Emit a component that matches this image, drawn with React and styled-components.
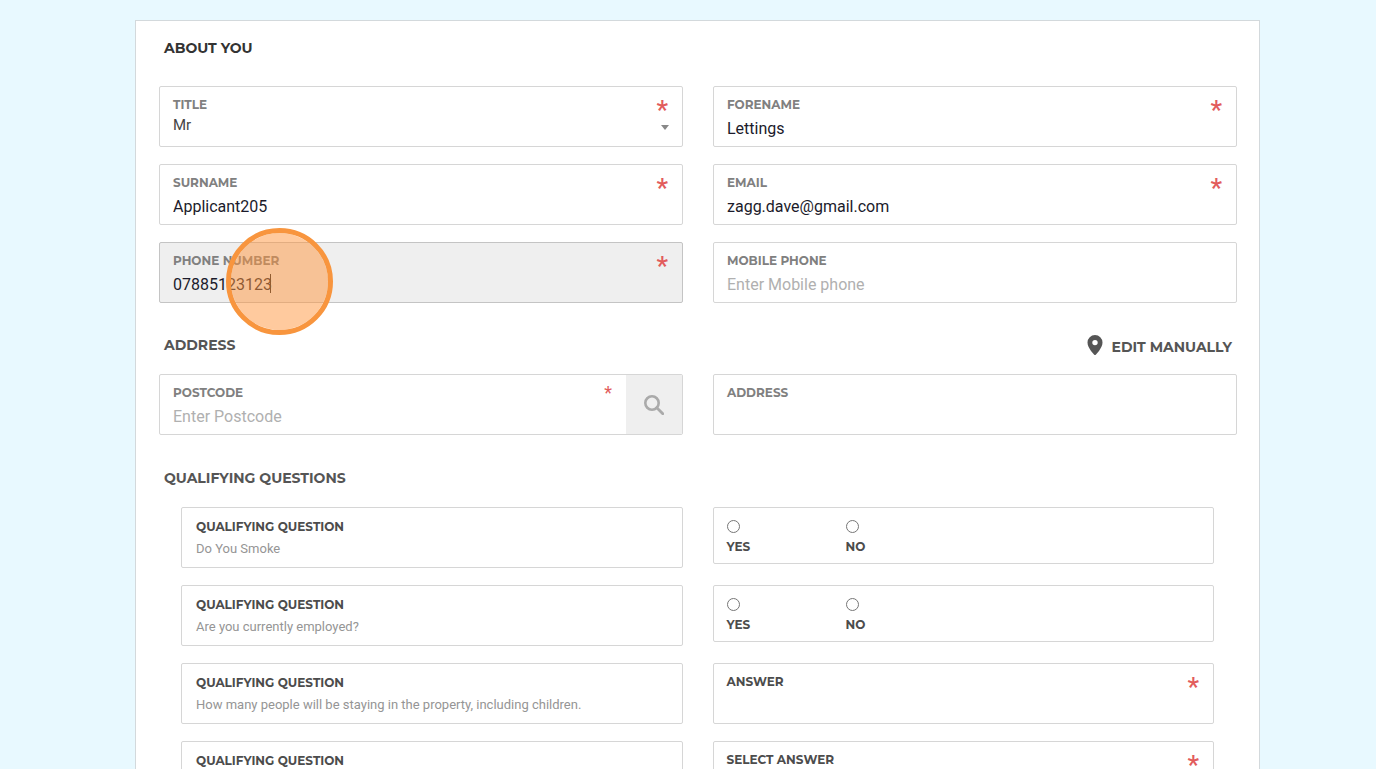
import React, { useState } from "react";
import styled, { createGlobalStyle } from "styled-components";

const GlobalStyle = createGlobalStyle`
  * {
    box-sizing: border-box;
  }
  body {
    margin: 0;
    background: #e8f9ff;
    font-family: Roboto, "Liberation Sans", sans-serif;
  }
  input, select, button {
    font-family: inherit;
  }
`;

const yesNoQuestions = [
  { id: "smoke", text: "Do You Smoke" },
  { id: "employed", text: "Are you currently employed?" },
];

function TextField({ id, label, required, placeholder, value = "", active, children }) {
  const [text, setText] = useState(value);
  return (
    <Box $active={active}>
      <Label htmlFor={id}>{label}</Label>
      <Input
        id={id}
        value={text}
        placeholder={placeholder}
        onChange={(e) => setText(e.target.value)}
      />
      {required && <Required>*</Required>}
      {children}
    </Box>
  );
}

function Question({ text }) {
  return (
    <QuestionBox>
      <Label as="div" $dark>QUALIFYING QUESTION</Label>
      {text && <QuestionText>{text}</QuestionText>}
    </QuestionBox>
  );
}

function YesNo({ id }) {
  return (
    <ChoiceBox>
      {["YES", "NO"].map((option) => (
        <Choice key={option}>
          <input type="radio" name={id} value={option} />
          {option}
        </Choice>
      ))}
    </ChoiceBox>
  );
}

function App() {
  return (
    <Page>
      <GlobalStyle />
      <Card>
        <TopHead>
          <Heading $first>ABOUT YOU</Heading>
        </TopHead>
        <Grid>
          <Box>
            <Label htmlFor="title">TITLE</Label>
            <Select id="title" defaultValue="Mr">
              <option>Mr</option>
              <option>Mrs</option>
              <option>Miss</option>
              <option>Ms</option>
            </Select>
            <Arrow viewBox="0 0 8 5">
              <path d="M0 0h8L4 5z" />
            </Arrow>
            <Required>*</Required>
          </Box>
          <TextField id="forename" label="FORENAME" value="Lettings" required />
          <TextField id="surname" label="SURNAME" value="Applicant205" required />
          <TextField id="email" label="EMAIL" value="zagg.dave@gmail.com" required />
          <TextField id="phone" label="PHONE NUMBER" value="07885123123" required active>
            <Caret />
            <ClickMarker />
          </TextField>
          <TextField id="mobile" label="MOBILE PHONE" placeholder="Enter Mobile phone" />
        </Grid>

        <SectionHead>
          <Heading>ADDRESS</Heading>
          <EditButton type="button">
            <svg width="16" height="20" viewBox="0 0 16 20">
              <path
                fill="currentColor"
                fillRule="evenodd"
                d="M8 0a7.500 7.500 0 0 1 7.500 7.500c0 3-1.600 5.500-3.500 8.500L9 19.400a1.200 1.200 0 0 1-2 0L4 16C2.100 13 .5 10.500.5 7.500A7.500 7.500 0 0 1 8 0zm0 4.900a2.700 2.700 0 1 0 0 5.400 2.700 2.700 0 0 0 0-5.400z"
              />
            </svg>
            <span>EDIT MANUALLY</span>
          </EditButton>
        </SectionHead>
        <Grid>
          <SearchRow>
            <SearchField>
              <Label htmlFor="postcode">POSTCODE</Label>
              <Input id="postcode" placeholder="Enter Postcode" />
              <Required $small>*</Required>
            </SearchField>
            <SearchButton type="button" aria-label="Search">
              <svg width="20" height="20" viewBox="0 0 20 20" fill="none" stroke="currentColor">
                <circle cx="8" cy="8" r="6.700" strokeWidth="2.600" />
                <path d="M12.800 12.800l6 6" strokeWidth="2.800" strokeLinecap="round" />
              </svg>
            </SearchButton>
          </SearchRow>
          <TextField id="address" label="ADDRESS" />
        </Grid>

        <QuestionsHead>
          <Heading>QUALIFYING QUESTIONS</Heading>
        </QuestionsHead>
        <Grid $inset>
          {yesNoQuestions.map((q) => (
            <React.Fragment key={q.id}>
              <Question text={q.text} />
              <YesNo id={q.id} />
            </React.Fragment>
          ))}
          <Question text="How many people will be staying in the property, including children." />
          <Box>
            <Label htmlFor="people" $dark>ANSWER</Label>
            <Input id="people" />
            <Required>*</Required>
          </Box>
          <Question />
          <Box>
            <Label htmlFor="choice" $dark>SELECT ANSWER</Label>
            <Select id="choice" />
            <Required>*</Required>
          </Box>
        </Grid>
      </Card>
    </Page>
  );
}

const Page = styled.div`
  height: 100vh;
  padding: 20px 116px 0 135px;
  overflow-y: auto;
  scrollbar-width: none;
`;

const Card = styled.form`
  padding: 0 22px 40px 23px;
  background: #fff;
  border: 1px solid #d3d9dc;
`;

const SectionHead = styled.div`
  display: flex;
  align-items: center;
  justify-content: space-between;
  height: 71px;
  padding: 12px 5px 0;
`;

const TopHead = styled(SectionHead)`
  height: 65px;
  padding: 0 5px 12px;
`;

const QuestionsHead = styled(SectionHead)`
  height: 72px;
  padding-top: 14px;
`;

const Heading = styled.h2`
  margin: 0;
  color: ${(p) => (p.$first ? "#333" : "#555")};
  font: 700 14px/20px Montserrat, Inter, sans-serif;
`;

const Grid = styled.div`
  display: grid;
  grid-template-columns: 1fr 1fr;
  align-items: start;
  gap: 17px 30px;
  padding: ${(p) => (p.$inset ? "0 23px 0 22px" : "0")};
`;

const Box = styled.div`
  position: relative;
  height: 61px;
  padding: 10px 13px 0;
  background: ${(p) => (p.$active ? "#efefef" : "#fff")};
  border: 1px solid ${(p) => (p.$active ? "#c4c4c4" : "#d6d6d6")};
  border-radius: 2px;
`;

const QuestionBox = styled(Box)`
  padding: 11px 14px 0;
`;

const Label = styled.label`
  display: block;
  color: ${(p) => (p.$dark ? "#4c4c4c" : "#808080")};
  font: 700 12px/16px Montserrat, Inter, sans-serif;
`;

const Input = styled.input`
  display: block;
  width: 100%;
  height: 24px;
  margin-top: 3px;
  padding: 0;
  color: #1b1b2b;
  font-size: 16px;
  background: none;
  border: 0;
  outline: 0;
  &::placeholder {
    color: #b0b0b0;
  }
`;

const Select = styled.select`
  display: block;
  width: 100%;
  height: 24px;
  padding: 0;
  color: #444;
  font-size: 15px;
  background: none;
  border: 0;
  outline: 0;
  appearance: none;
`;

const Arrow = styled.svg`
  position: absolute;
  right: 13px;
  bottom: 16px;
  width: 8px;
  height: 5px;
  fill: #888;
  pointer-events: none;
`;

const Required = styled.span`
  position: absolute;
  top: ${(p) => (p.$small ? "8px" : "9px")};
  right: 14px;
  color: #e25c5c;
  font-size: ${(p) => (p.$small ? "18px" : "26px")};
  font-weight: ${(p) => (p.$small ? 400 : 500)};
  line-height: ${(p) => (p.$small ? "20px" : "28px")};
`;

const Caret = styled.span`
  position: absolute;
  top: 31px;
  left: 110px;
  width: 1px;
  height: 19px;
  background: #222;
`;

const ClickMarker = styled.span`
  position: absolute;
  z-index: 1;
  top: -15px;
  left: 66px;
  width: 107px;
  height: 107px;
  background: rgba(255, 149, 62, 0.5);
  border: 5px solid #f8953e;
  border-radius: 50%;
  background-clip: padding-box;
  pointer-events: none;
`;

const EditButton = styled.button`
  display: flex;
  align-items: center;
  gap: 9px;
  padding: 0;
  color: #555;
  font: 700 14px/20px Montserrat, Inter, sans-serif;
  background: none;
  border: 0;
  span {
    padding-top: 4px;
  }
`;

const SearchRow = styled.div`
  display: flex;
  height: 61px;
  overflow: hidden;
  border: 1px solid #d6d6d6;
  border-radius: 2px;
`;

const SearchField = styled.div`
  position: relative;
  flex: 1;
  padding: 10px 13px 0;
`;

const SearchButton = styled.button`
  display: flex;
  align-items: center;
  justify-content: center;
  width: 56px;
  padding: 0;
  color: #aaa;
  background: #efefef;
  border: 0;
`;

const QuestionText = styled.p`
  margin: 4px 0 0;
  color: #959595;
  font-size: 13px;
  line-height: 20px;
`;

const ChoiceBox = styled.div`
  display: flex;
  height: 57px;
  padding: 12px 13px 0;
  border: 1px solid #d6d6d6;
  border-radius: 2px;
`;

const Choice = styled.label`
  display: flex;
  flex-direction: column;
  gap: 6px;
  width: 119px;
  color: #4c4c4c;
  font: 700 12px/16px Montserrat, Inter, sans-serif;
  input {
    width: 13px;
    height: 13px;
    margin: 0;
  }
`;

export default App;
